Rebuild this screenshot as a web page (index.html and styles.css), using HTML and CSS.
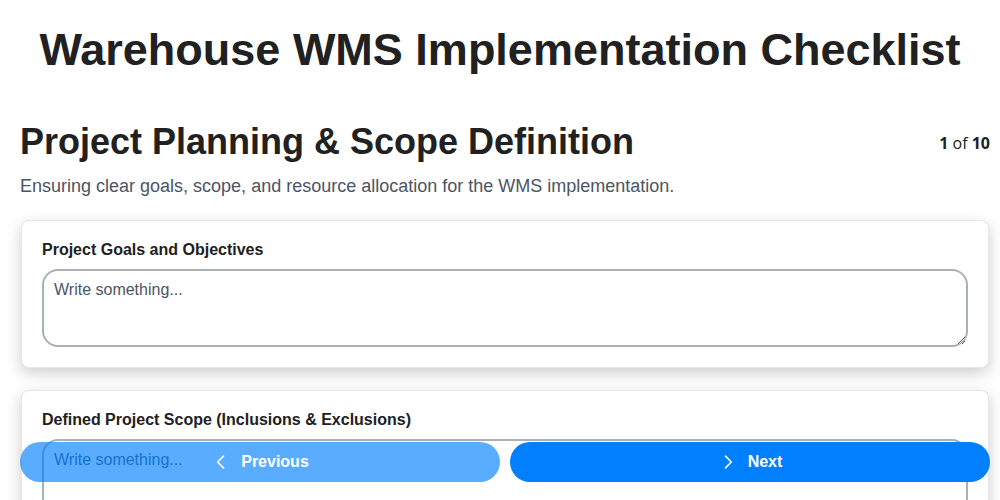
FILE: index.html
```html
<!DOCTYPE html>
<html lang="en">
<head>
    <meta charset="UTF-8">
    <meta name="viewport" content="width=device-width, initial-scale=1">
    <title>Warehouse WMS Implementation Checklist</title>
    <link rel="stylesheet" href="styles.css">
</head>
<body>
    <h1 class="page-title">Warehouse WMS Implementation Checklist</h1>

    <div class="section">
        <div class="section-head">
            <h2>Project Planning &amp; Scope Definition</h2>
            <div class="step-count"><b>1</b> of <b>10</b></div>
        </div>
        <p class="section-desc">Ensuring clear goals, scope, and resource allocation for the WMS implementation.</p>

        <div class="card">
            <label class="field-label" for="q1">Project Goals and Objectives</label>
            <textarea id="q1" class="field" placeholder="Write something..."></textarea>
        </div>

        <div class="card">
            <label class="field-label" for="q2">Defined Project Scope (Inclusions &amp; Exclusions)</label>
            <textarea id="q2" class="field" placeholder="Write something..."></textarea>
        </div>
    </div>

    <!-- Bottom navigation -->
    <div class="nav-bar">
        <button class="nav-btn prev" disabled>
            <svg width="20" height="20" viewBox="0 0 24 24" fill="none" stroke="currentColor" stroke-width="2" stroke-linecap="round" stroke-linejoin="round"><path d="M15 19l-7-7 7-7"/></svg>
            <span>Previous</span>
        </button>
        <button class="nav-btn next">
            <svg width="20" height="20" viewBox="0 0 24 24" fill="none" stroke="currentColor" stroke-width="2" stroke-linecap="round" stroke-linejoin="round"><path d="M9 5l7 7-7 7"/></svg>
            <span>Next</span>
        </button>
    </div>
</body>
</html>
```

FILE: styles.css
```css
* {
    box-sizing: border-box;
    margin: 0;
    padding: 0;
}

html {
    scrollbar-width: none;
}

html::-webkit-scrollbar {
    display: none;
}

body {
    font-family: 'Liberation Sans', Arial, sans-serif;
    color: #212121;
    background: white;
    padding: 24px 0 100px;
}

.page-title {
    text-align: center;
    font-size: 45px;
    font-weight: bold;
    line-height: 52px;
}

.section {
    margin-top: 45px;
    padding: 0 10px 0 20px;
}

.section-head {
    display: flex;
    justify-content: space-between;
    align-items: flex-start;
}

.section-head h2 {
    font-size: 36px;
    line-height: 42px;
}

.step-count {
    font-family: 'Open Sans', sans-serif;
    font-size: 16px;
    margin-top: 11px;
    color: #212121;
}

.section-desc {
    font-size: 18px;
    color: #4b5563;
    margin-top: 13px;
    margin-bottom: 23px;
}

.card {
    background: white;
    border: 1px solid #e5e7eb;
    border-radius: 8px;
    padding: 20px 20px 20px;
    margin: 0 1px 22px 1px;
    box-shadow: 0 5px 15px rgba(0, 0, 0, 0.2);
}

.field-label {
    display: block;
    font-size: 16px;
    font-weight: bold;
    margin-bottom: 10px;
}

.field {
    display: block;
    width: 100%;
    height: 78px;
    border: 2px solid #a9b0b8;
    border-radius: 16px;
    padding: 10px 10px;
    font-family: 'Liberation Sans', Arial, sans-serif;
    font-size: 16px;
    color: #212121;
    resize: vertical;
    outline: none;
}

.field::placeholder {
    color: #4b5563;
}

.nav-bar {
    position: fixed;
    left: 20px;
    right: 10px;
    bottom: 18px;
    display: flex;
    gap: 10px;
}

.nav-btn {
    flex: 1;
    height: 40px;
    border: none;
    border-radius: 20px;
    background: #0080ff;
    color: white;
    font-family: 'Liberation Sans', Arial, sans-serif;
    font-size: 16px;
    font-weight: bold;
    display: flex;
    align-items: center;
    justify-content: center;
    gap: 10px;
    cursor: pointer;
}

.nav-btn.prev {
    opacity: 0.65;
    cursor: default;
}
```
